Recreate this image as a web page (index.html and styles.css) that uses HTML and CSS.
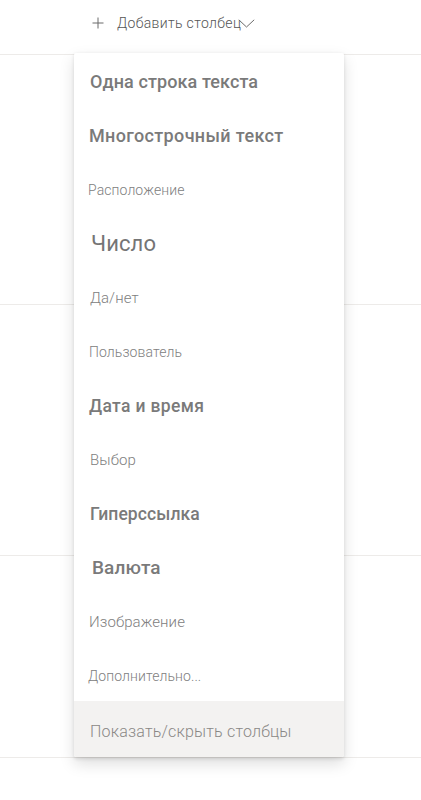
FILE: index.html
```html
<!DOCTYPE html>
<html lang="ru">
<head>
<meta charset="utf-8">
<title>Добавить столбец</title>
<link rel="stylesheet" href="styles.css">
</head>
<body>
<div class="page">
  <header class="toolbar">
    <button class="add-btn" type="button">
      <svg class="plus" width="12" height="12" viewBox="0 0 12 12"><path d="M6 0.5V11.5M0.5 6H11.5" stroke="#6b6b6b" stroke-width="1" fill="none"/></svg>
      <span class="add-label">Добавить столбец</span>
      <svg class="chev" width="17" height="9" viewBox="0 0 17 9"><path d="M0.8 0.8L8.5 8L16.2 0.8" stroke="#6b6b6b" stroke-width="1" fill="none"/></svg>
    </button>
  </header>
  <div class="row row-a"></div>
  <div class="row row-b"></div>
  <div class="row row-c"></div>

  <div class="menu">
    <ul class="menu-list">
      <li class="item semi s18 x1">Одна строка текста</li>
      <li class="item med s18 x0 wide">Многострочный текст</li>
      <li class="item light s14 x-1">Расположение</li>
      <li class="item reg s22 x2">Число</li>
      <li class="item light s15 x1">Да/нет</li>
      <li class="item light s14 x0">Пользователь</li>
      <li class="item semi s17 x0 wide">Дата и время</li>
      <li class="item light s15 x1">Выбор</li>
      <li class="item semi s17 x1">Гиперссылка</li>
      <li class="item semi s19 x3">Валюта</li>
      <li class="item light s15 x0">Изображение</li>
      <li class="item light s14 x-1">Дополнительно...</li>
    </ul>
    <div class="menu-footer">Показать/скрыть столбцы</div>
  </div>
</div>
</body>
</html>
```

FILE: styles.css
```css
* { box-sizing: border-box; }
html, body { margin: 0; padding: 0; background: #fff; }
body { font-family: Roboto, "Segoe UI", "Liberation Sans", sans-serif; }

.page { position: relative; width: 421px; height: 800px; overflow: hidden; }

.toolbar {
  height: 55px;
  border-bottom: 1px solid #edebe9;
  display: flex;
  align-items: flex-start;
}
.add-btn {
  margin: 0;
  padding: 0;
  border: 0;
  background: none;
  display: flex;
  align-items: center;
  height: 46px;
  padding-left: 92px;
  font-family: inherit;
  cursor: pointer;
}
.plus { margin-right: 13px; }
.add-label { font-size: 14px; font-weight: 300; color: #555; letter-spacing: 0.35px; }
.chev { margin-left: -3px; margin-top: 0; }

.row { border-bottom: 1px solid #edebe9; }
.row-a { height: 250px; }
.row-b { height: 251px; }
.row-c { height: 202px; }

.menu {
  position: absolute;
  left: 74px;
  top: 53px;
  width: 270px;
  background: #fff;
  border-radius: 2px;
  box-shadow: 0 6.4px 14.4px rgba(0,0,0,0.13), 0 1.2px 3.6px rgba(0,0,0,0.11);
  overflow: hidden;
}
.menu-list { list-style: none; margin: 0; padding: 0; }
.item {
  height: 54px;
  display: flex;
  align-items: center;
  padding-top: 3px;
  padding-left: 15px;
  white-space: nowrap;
  color: #7a7a7a;
  letter-spacing: 0.1px;
}
.wide { letter-spacing: 0.35px; }
.semi { font-weight: 500; color: #7a7a7a; }
.med { font-weight: 500; color: #7a7a7a; }
.reg { font-weight: 400; color: #757575; }
.light { font-weight: 300; color: #808080; }
.s14 { font-size: 14px; }
.s15 { font-size: 15px; }
.s17 { font-size: 17.5px; }
.s18 { font-size: 18px; }
.s19 { font-size: 19px; }
.s22 { font-size: 22px; }
.x-1 { padding-left: 14px; }
.x0 { padding-left: 15px; }
.x1 { padding-left: 16px; }
.x2 { padding-left: 17px; }
.x3 { padding-left: 18px; }

.menu-footer {
  height: 56px;
  background: #f3f2f1;
  display: flex;
  align-items: center;
  padding: 4px 0 0 16px;
  font-size: 16px;
  font-weight: 300;
  color: #8a8886;
  letter-spacing: 0.2px;
}
```
